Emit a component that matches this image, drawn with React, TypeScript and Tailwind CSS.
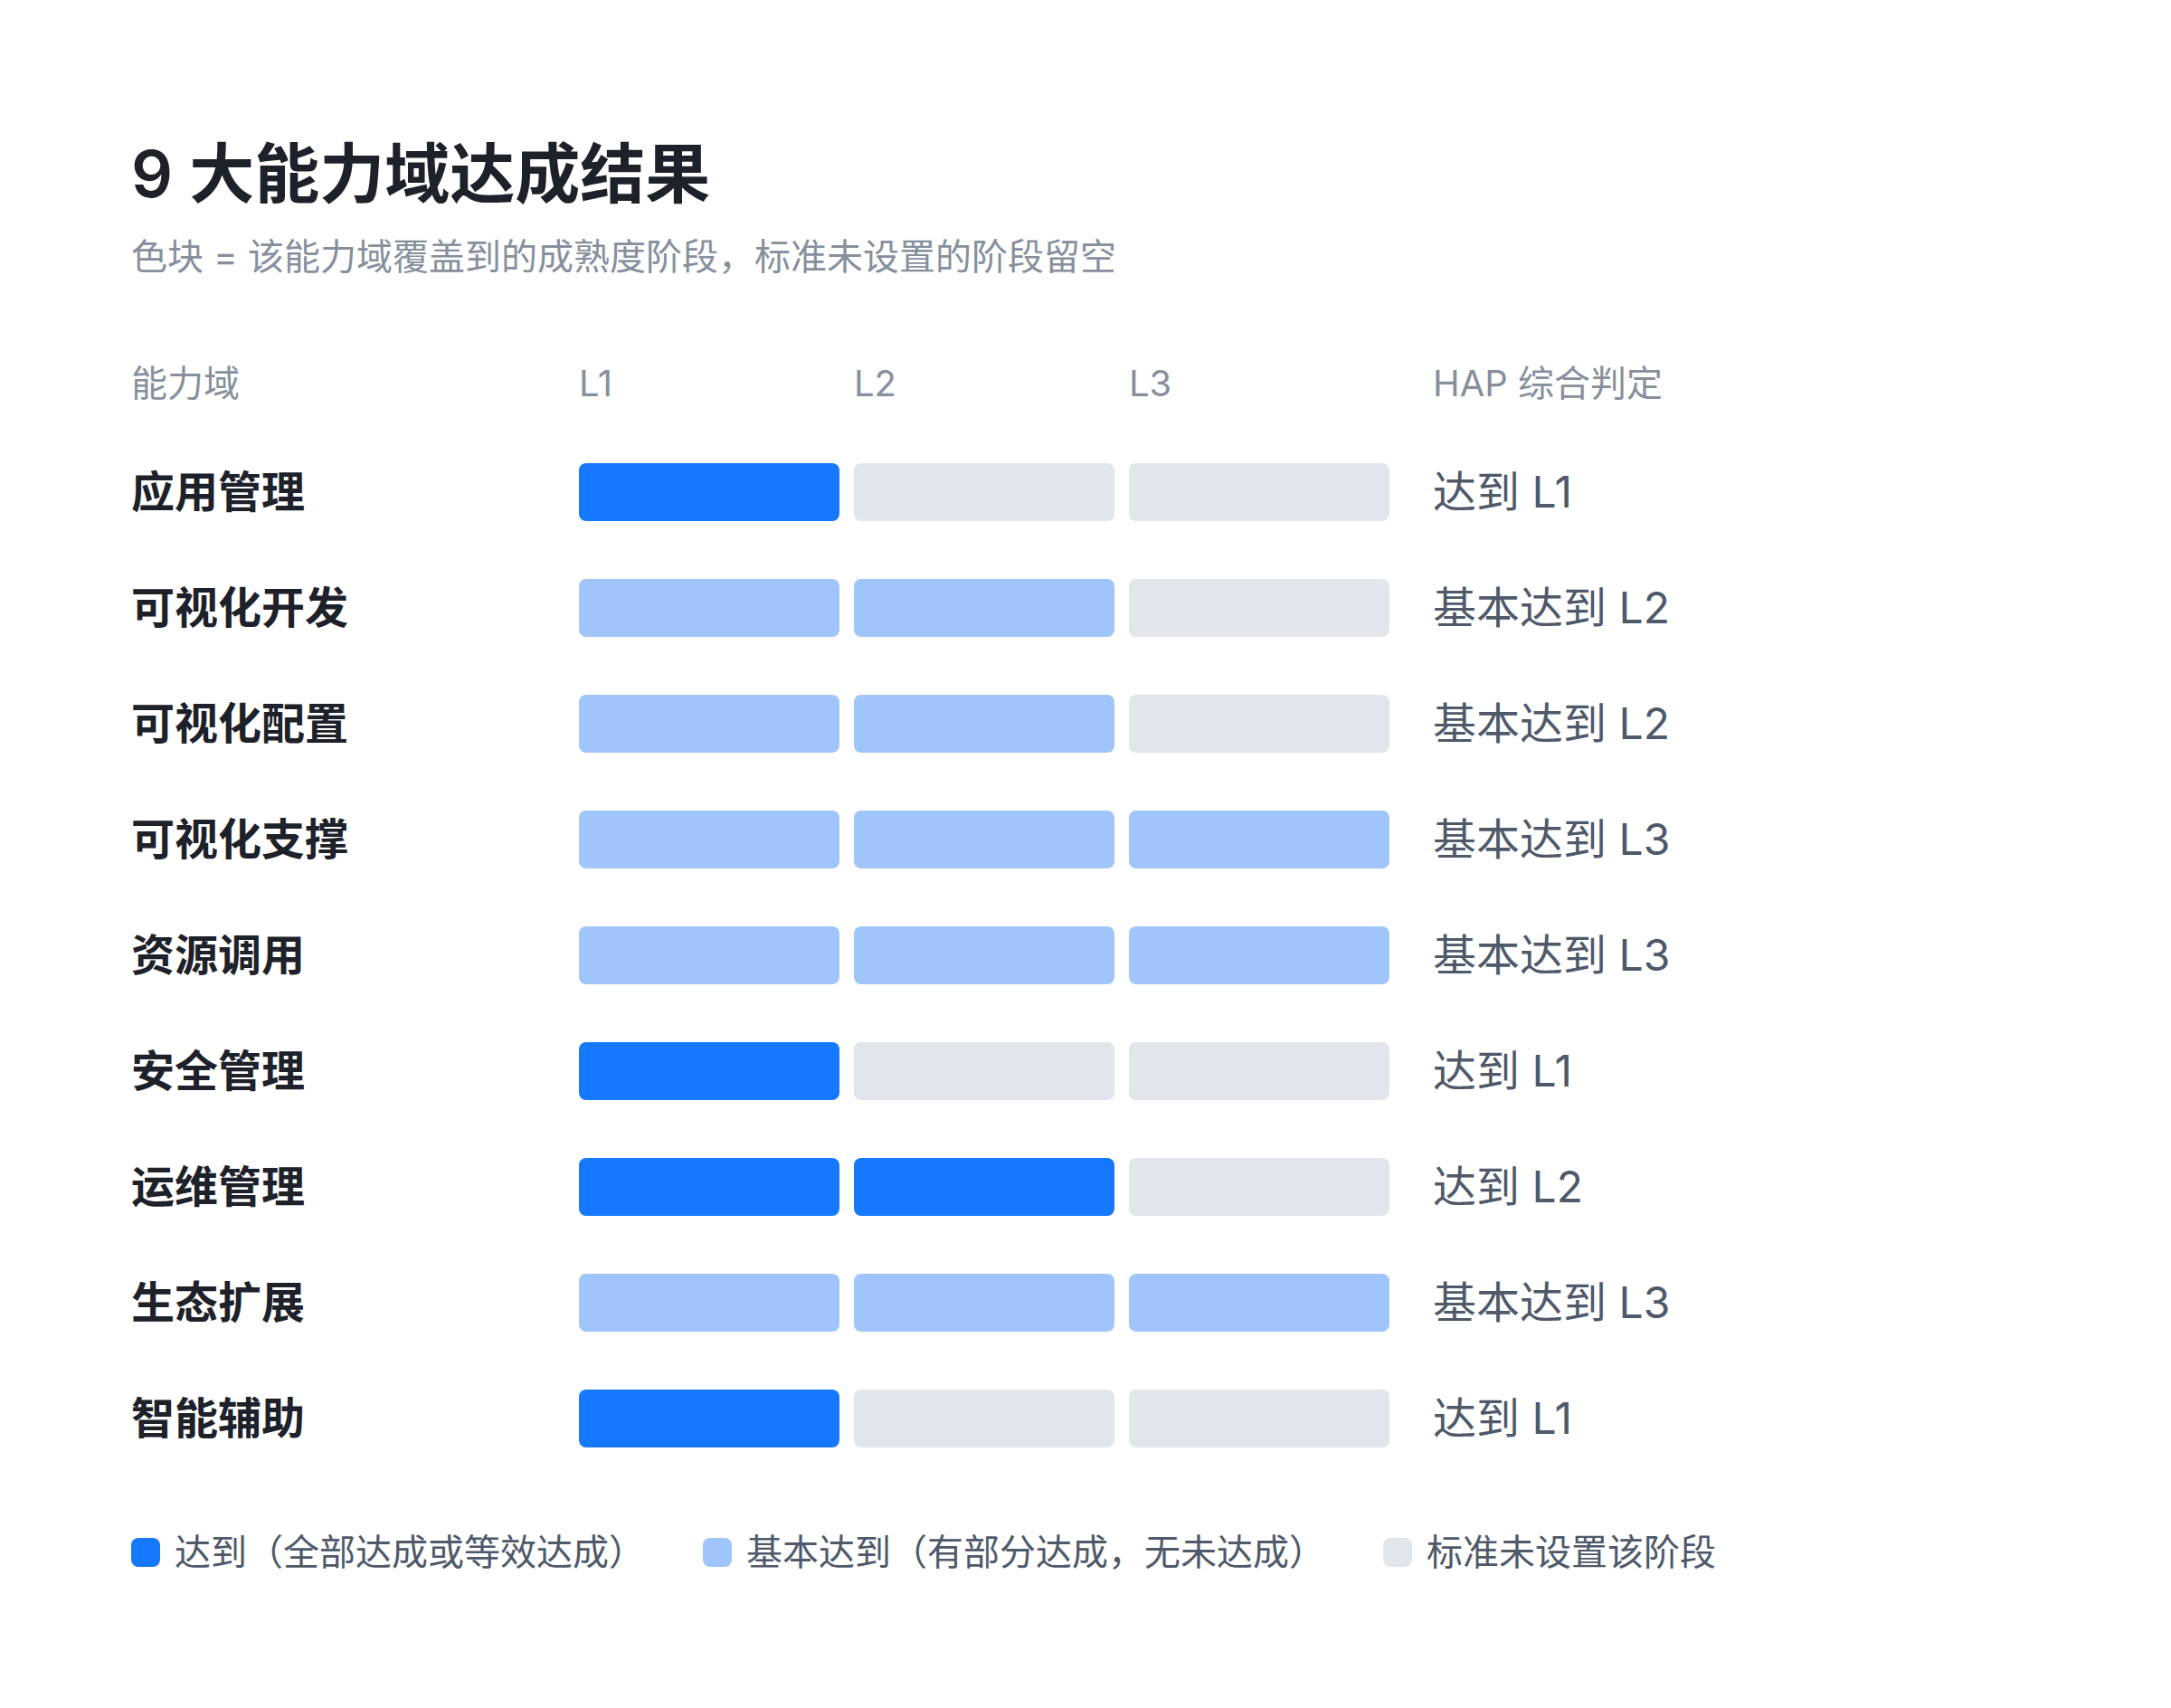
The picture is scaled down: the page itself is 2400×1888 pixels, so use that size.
import React from "react";

type S = "f" | "l" | "e";
const rows: { name: string; s: S[]; r: string }[] = [
  { name: "应用管理", s: ["f", "e", "e"], r: "达到 L1" },
  { name: "可视化开发", s: ["l", "l", "e"], r: "基本达到 L2" },
  { name: "可视化配置", s: ["l", "l", "e"], r: "基本达到 L2" },
  { name: "可视化支撑", s: ["l", "l", "l"], r: "基本达到 L3" },
  { name: "资源调用", s: ["l", "l", "l"], r: "基本达到 L3" },
  { name: "安全管理", s: ["f", "e", "e"], r: "达到 L1" },
  { name: "运维管理", s: ["f", "f", "e"], r: "达到 L2" },
  { name: "生态扩展", s: ["l", "l", "l"], r: "基本达到 L3" },
  { name: "智能辅助", s: ["f", "e", "e"], r: "达到 L1" },
];

const cls: Record<S, string> = {
  f: "bg-[#1677ff]",
  l: "bg-[#9fc5fa]",
  e: "bg-[#e1e5ec]",
};

export default function App() {
  return (
    <div
      className="min-h-[1888px] w-[2400px] bg-white pl-[145px] pt-[156px]"
      style={{ fontFamily: 'Inter, "Noto Sans CJK SC", sans-serif' }}
    >
      <h1 className="text-[72px] leading-[72px] font-semibold text-[#1d2129]">9 大能力域达成结果</h1>
      <p className="mt-[36px] text-[40px] leading-[40px] text-[#86909c]">
        色块 = 该能力域覆盖到的成熟度阶段，标准未设置的阶段留空
      </p>

      <div className="mt-[100px] flex h-[40px] items-center text-[40px] leading-[40px] text-[#86909c]">
        <div className="w-[495px]">能力域</div>
        <div className="flex gap-4">
          <div className="w-[288px]">L1</div>
          <div className="w-[288px]">L2</div>
          <div className="w-[288px]">L3</div>
        </div>
        <div className="ml-12">HAP 综合判定</div>
      </div>

      <div className="mt-[36px] flex flex-col">
        {rows.map((row) => (
          <div key={row.name} className="flex h-[128px] items-center">
            <div className="w-[495px] text-[48px] leading-[48px] font-semibold text-[#1d2129]">{row.name}</div>
            <div className="flex gap-4">
              {row.s.map((s, i) => (
                <div key={i} className={`h-[64px] w-[288px] rounded-lg ${cls[s]}`} />
              ))}
            </div>
            <div className="ml-12 text-[48px] leading-[48px] text-[#4e5969]">{row.r}</div>
          </div>
        ))}
      </div>

      <div className="mt-[64px] flex h-[40px] items-center gap-16 text-[40px] leading-[40px] text-[#4e5969]">
        <div className="flex items-center gap-4">
          <span className="h-[32px] w-[32px] rounded-lg bg-[#1677ff]" />
          <span>达到（全部达成或等效达成）</span>
        </div>
        <div className="flex items-center gap-4">
          <span className="h-[32px] w-[32px] rounded-lg bg-[#9fc5fa]" />
          <span>基本达到（有部分达成，无未达成）</span>
        </div>
        <div className="flex items-center gap-4">
          <span className="h-[32px] w-[32px] rounded-lg bg-[#e1e5ec]" />
          <span>标准未设置该阶段</span>
        </div>
      </div>
    </div>
  );
}
